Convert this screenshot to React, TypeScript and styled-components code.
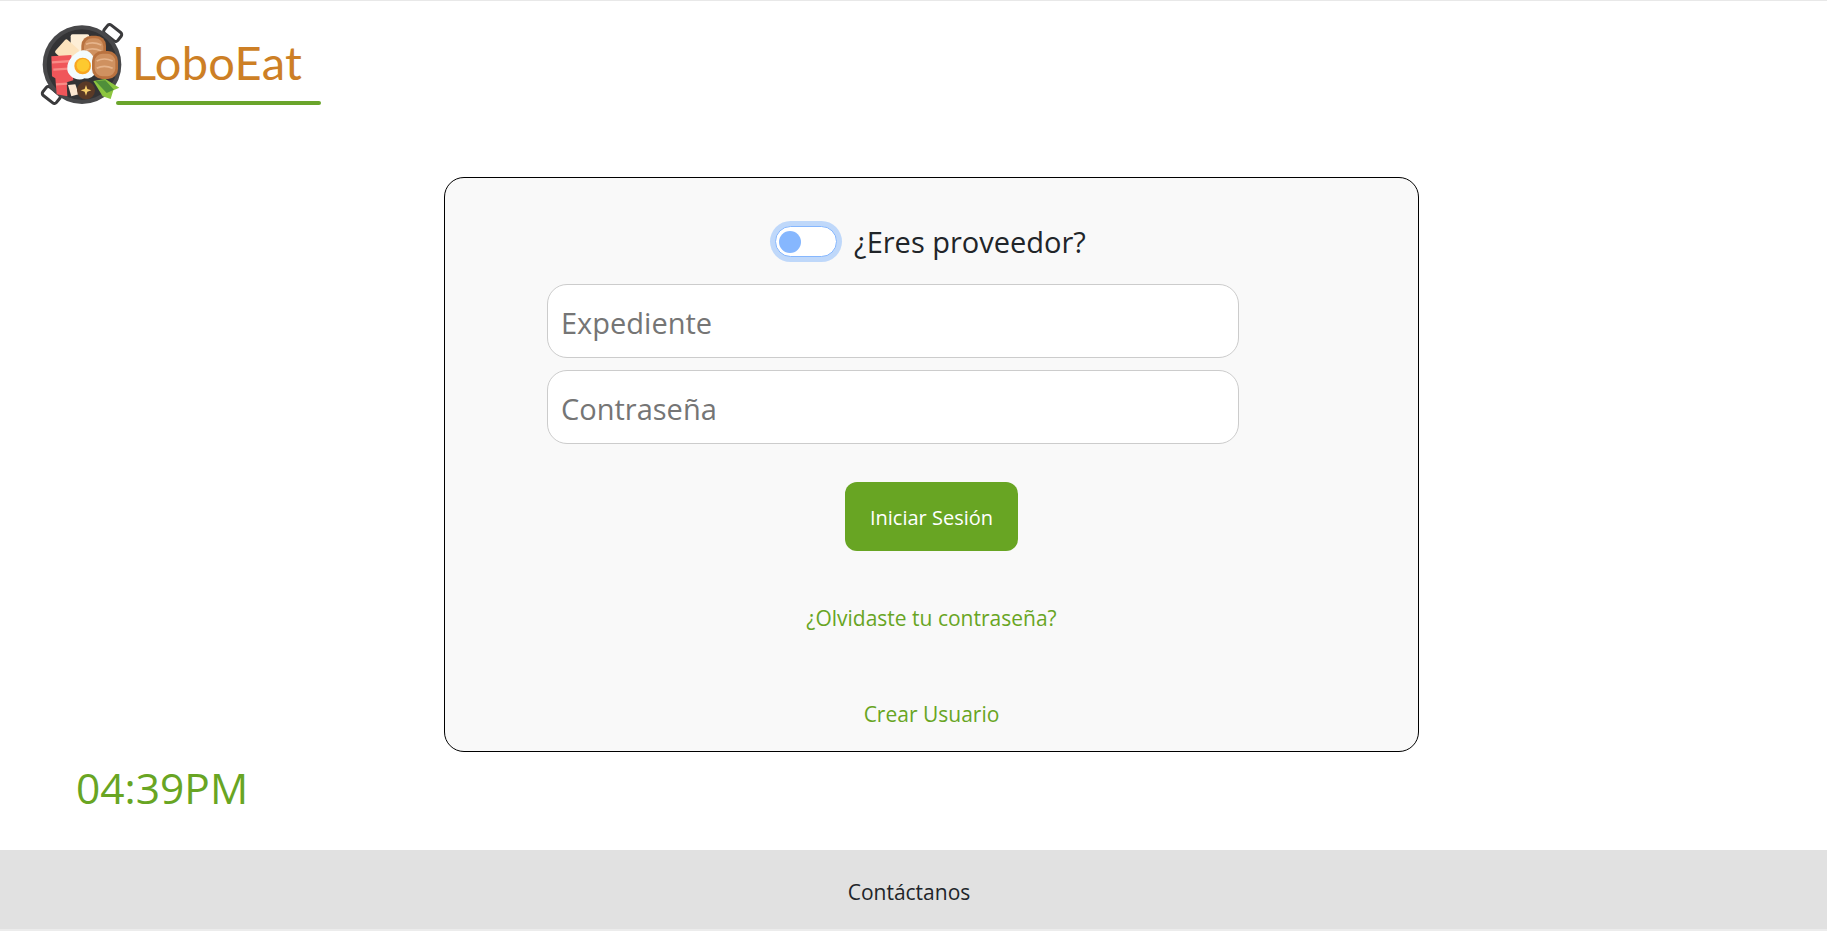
import React from 'react';
import styled, { createGlobalStyle } from 'styled-components';

const GlobalStyle = createGlobalStyle`
  html, body {
    margin: 0;
    padding: 0;
    background: #ffffff;
    font-family: 'Open Sans', 'Noto Sans', sans-serif;
  }
  * {
    box-sizing: border-box;
  }
`;

const Logo = () => (
  <svg width="95" height="92" viewBox="0 0 285 276">
    {/* handles */}
    <rect x="204" y="26" width="52" height="32" rx="8" fill="#fff" stroke="#3a3a3c" strokeWidth="9" transform="rotate(38 230 42)" />
    <rect x="20" y="212" width="52" height="32" rx="8" fill="#fff" stroke="#3a3a3c" strokeWidth="9" transform="rotate(38 46 228)" />
    {/* pan */}
    <circle cx="138" cy="137" r="118" fill="#48484a" />
    <circle cx="138" cy="137" r="106" fill="#333335" />
    {/* tofu */}
    <rect x="104" y="46" width="56" height="58" rx="6" fill="#fdeed6" />
    <rect x="66" y="70" width="54" height="54" rx="6" fill="#fce3bd" transform="rotate(42 93 97)" />
    {/* bacon */}
    <path d="M46 112 L106 108 L112 184 L92 190 L94 232 L62 226 L58 178 L48 172 Z" fill="#f0565a" />
    <path d="M48 130 L108 126 M52 152 L110 148 M60 196 L94 194" stroke="#f98b86" strokeWidth="7" fill="none" />
    {/* back sausage */}
    <rect x="136" y="50" width="74" height="76" rx="30" fill="#b9723f" />
    <rect x="144" y="58" width="58" height="60" rx="24" fill="#cf9160" />
    <path d="M150 76 Q170 66 196 78 M150 94 Q170 84 196 96" stroke="#e6b48b" strokeWidth="5" fill="none" />
    {/* egg */}
    <path d="M140 94 C160 92 176 112 178 130 C192 152 172 184 146 178 C122 190 92 170 94 148 C92 124 118 98 140 94 Z" fill="#f3fbfd" />
    <circle cx="140" cy="141" r="25" fill="#f9a620" />
    <circle cx="141" cy="139" r="19" fill="#fdc92f" />
    {/* front sausage */}
    <rect x="168" y="96" width="78" height="84" rx="30" fill="#b9723f" />
    <rect x="176" y="104" width="62" height="68" rx="24" fill="#cf9160" />
    <path d="M182 126 Q204 114 230 126 M182 148 Q204 136 230 148" stroke="#e6b48b" strokeWidth="5" fill="none" />
    {/* leaves */}
    <path d="M172 186 L208 180 L250 206 L232 214 L224 240 L200 232 Z" fill="#8cc63f" />
    <path d="M178 186 L208 184 L234 212 L212 222 Z" fill="#4f8f3a" />
    {/* mushroom */}
    <path d="M96 198 L118 196 L128 226 L106 232 Z" fill="#fbe6d0" />
    <circle cx="150" cy="214" r="27" fill="#5a3a26" />
    <path d="M150 198 L154 210 L166 214 L154 218 L150 230 L146 218 L134 214 L146 210 Z" fill="#f7cf6b" />
  </svg>
);

export default function App() {
  return (
    <Page>
      <GlobalStyle />
      <Header>
        <Brand>
          <Logo />
          <BrandText>
            <BrandName>LoboEat</BrandName>
            <BrandRule />
          </BrandText>
        </Brand>
      </Header>

      <Main>
        <Card>
          <SwitchRow>
            <Switch />
            <SwitchLabel>¿Eres proveedor?</SwitchLabel>
          </SwitchRow>
          <Fields>
            <Input placeholder="Expediente" />
            <Input placeholder="Contraseña" />
          </Fields>
          <SubmitButton>Iniciar Sesión</SubmitButton>
          <ForgotLink href="#">¿Olvidaste tu contraseña?</ForgotLink>
          <CreateLink href="#">Crear Usuario</CreateLink>
        </Card>
        <Clock>04:39PM</Clock>
      </Main>

      <Footer>
        <FooterLink>Contáctanos</FooterLink>
      </Footer>
    </Page>
  );
}

const Page = styled.div`
  height: 931px;
  display: flex;
  flex-direction: column;
  border-top: 1px solid #e8e8e8;
  overflow: hidden;
`;

const Header = styled.header`
  height: 176px;
  padding: 18px 0 0 36px;
`;

const Brand = styled.div`
  display: flex;
  align-items: flex-start;
`;

const BrandText = styled.div`
  width: 205px;
  margin-left: -15px;
  padding-top: 18px;
`;

const BrandName = styled.div`
  height: 64px;
  padding-left: 16px;
  font-family: 'Lato', sans-serif;
  font-size: 47px;
  line-height: 50px;
  color: #cd7f25;
  letter-spacing: 0.3px;
  white-space: nowrap;
`;

const BrandRule = styled.div`
  height: 4px;
  border-radius: 2px;
  background: #6aa52b;
`;

const Main = styled.main`
  flex: 1;
`;

const Card = styled.section`
  width: 975px;
  height: 575px;
  margin-left: 444px;
  border: 1px solid #000000;
  border-radius: 20px;
  background: #f9f9f9;
  display: flex;
  flex-direction: column;
  align-items: center;
`;

const SwitchRow = styled.div`
  height: 106px;
  margin-left: -2px;
  padding: 48px 0 0 0;
  display: flex;
  align-items: flex-start;
  gap: 17px;
`;

const Switch = styled.span`
  width: 62px;
  height: 31px;
  border: 1px solid #86b7fe;
  border-radius: 16px;
  background: #ffffff;
  box-shadow: 0 0 0 5px #bfd8fa;
  display: flex;
  align-items: center;
  padding-left: 3px;

  &::before {
    content: '';
    width: 22px;
    height: 22px;
    border-radius: 50%;
    background: #86b7fe;
  }
`;

const SwitchLabel = styled.span`
  margin-top: 1px;
  font-size: 29px;
  line-height: 30px;
  color: #212529;
  white-space: nowrap;
`;

const Fields = styled.div`
  width: 692px;
  margin-left: -77px;
  display: flex;
  flex-direction: column;
  gap: 12px;
`;

const Input = styled.input`
  width: 100%;
  height: 74px;
  padding: 2px 13px 0;
  border: 1px solid #cccccc;
  border-radius: 20px;
  background: #ffffff;
  font-family: inherit;
  font-size: 29px;
  color: #212529;
  outline: none;

  &::placeholder {
    color: #757575;
    opacity: 1;
  }
`;

const SubmitButton = styled.button`
  width: 173px;
  height: 69px;
  margin-top: 38px;
  padding: 1px 0 0;
  border: none;
  border-radius: 12px;
  background: #68a523;
  color: #ffffff;
  font-family: inherit;
  font-size: 20px;
`;

const ForgotLink = styled.a`
  margin-top: 51px;
  font-size: 21px;
  line-height: 32px;
  color: #68a523;
  text-decoration: none;
`;

const CreateLink = styled.a`
  margin-top: 64px;
  font-size: 21px;
  line-height: 32px;
  color: #68a523;
  text-decoration: none;
`;

const Clock = styled.div`
  margin: 6px 0 0 76px;
  font-size: 42.5px;
  line-height: 60px;
  color: #68a523;
`;

const Footer = styled.footer`
  height: 81px;
  padding-top: 4px;
  flex-shrink: 0;
  background: #e1e1e1;
  border-bottom: 2px solid #ececec;
  display: flex;
  align-items: center;
  justify-content: center;
`;

const FooterLink = styled.span`
  margin-right: 9px;
  font-size: 21px;
  color: #212529;
`;
